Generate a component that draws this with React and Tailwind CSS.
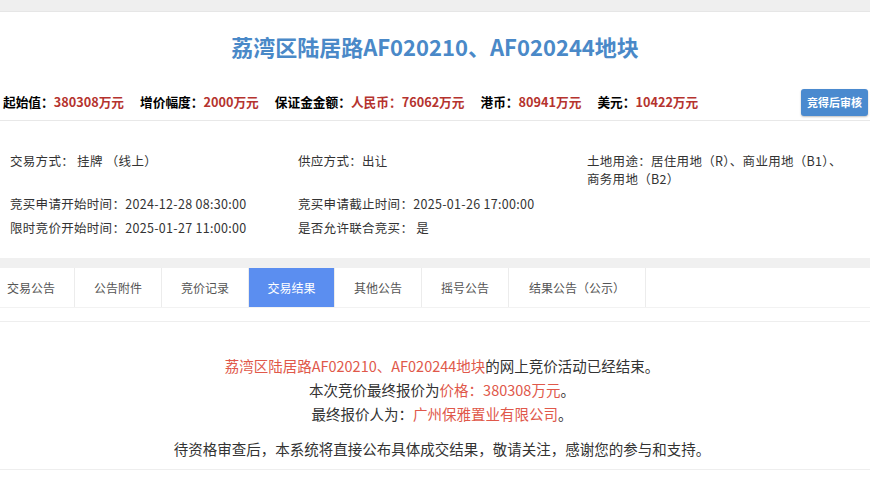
import React from 'react';

const tabs = [
  { name: '交易公告', w: 'w-[75px] justify-start pl-[7px]' },
  { name: '公告附件', w: 'w-[87px] justify-center' },
  { name: '竞价记录', w: 'w-[87px] justify-center' },
  { name: '交易结果', w: 'w-[86px] justify-center', active: true },
  { name: '其他公告', w: 'w-[87px] justify-center' },
  { name: '摇号公告', w: 'w-[87px] justify-center' },
  { name: '结果公告（公示）', w: 'w-[137px] justify-center' },
];

const prices = [
  ['起始值：', '380308万元'],
  ['增价幅度：', '2000万元'],
  ['保证金金额：', '人民币：76062万元'],
  ['港币：', '80941万元'],
  ['美元：', '10422万元'],
];

function Info({ label, children, className = 'leading-[17px]' }) {
  return (
    <div className={className}>
      <span>{label}</span>
      <span>{children}</span>
    </div>
  );
}

export default function App() {
  return (
    <div className="w-[870px] h-[492px] overflow-hidden bg-white text-[#333] font-['Noto_Sans_CJK_SC','Noto_Sans',sans-serif]">
      {/* 顶部灰条 */}
      <div className="h-3 bg-[#efefef] border-b border-[#e6e6e6]" />

      {/* 标题 */}
      <h1 className="pt-[19px] text-center text-[22px] leading-[30px] font-bold text-[#4a89c8]">
        荔湾区陆居路AF020210、AF020244地块
      </h1>

      {/* 价格行 */}
      <div className="mt-[27px] pb-[4px] border-b border-[#e8e8e8]">
        <div className="h-[28px] flex items-center pl-[3px] pr-[2px]">
          <div className="flex gap-[16px] text-[12.7px] font-bold text-black">
            {prices.map(([label, value]) => (
              <div key={label}>
                {label}
                <span className="text-[#b5332e]">{value}</span>
              </div>
            ))}
          </div>
          <button className="ml-auto w-[67px] h-[27px] rounded-[3px] bg-[#4a8acf] text-white text-[11px] font-bold shadow-[0_1px_2px_rgba(0,0,0,0.25)]">
            竞得后审核
          </button>
        </div>
      </div>

      {/* 详情 */}
      <div className="pt-[31px] pb-[22px] pl-[10px] grid grid-cols-[288px_289px_1fr] gap-y-[7px] text-[12.5px] tracking-[0.3px] text-[#333]">
        <Info label="交易方式：">&nbsp;挂牌 （线上）</Info>
        <Info label="供应方式：">出让</Info>
        <Info label="土地用途：" className="leading-[18px]">
          居住用地（R）、商业用地（B1）、
          <br />
          商务用地（B2）
        </Info>
        <Info label="竞买申请开始时间：">2024-12-28 08:30:00</Info>
        <Info label="竞买申请截止时间：">2025-01-26 17:00:00</Info>
        <div />
        <Info label="限时竞价开始时间：">2025-01-27 11:00:00</Info>
        <Info label="是否允许联合竞买：">&nbsp;是</Info>
        <div />
      </div>

      {/* 标签页 */}
      <div className="h-[10px] bg-[#f0f0f0]" />
      <div className="flex h-[40px] border-b border-[#f2f2f2]">
        {tabs.map((t) => (
          <div
            key={t.name}
            className={`${t.w} flex items-center text-[12px] border-r border-[#ececec] ${
              t.active ? 'bg-[#5b8ef0] text-white' : 'text-[#555]'
            }`}
          >
            {t.name}
          </div>
        ))}
      </div>
      <div className="h-[14px] border-b border-[#eeeeee]" />

      {/* 结果 */}
      <div className="pt-[32px] pb-[8px] pl-[14px] border-b border-[#eeeeee] text-center text-[14.5px] leading-[24px] text-[#333]">
        <p>
          <span className="text-[#e0584a]">荔湾区陆居路AF020210、AF020244地块</span>
          的网上竞价活动已经结束。
        </p>
        <p>
          本次竞价最终报价为<span className="text-[#e0584a]">价格：380308万元</span>。
        </p>
        <p>
          最终报价人为：<span className="text-[#e0584a]">广州保雅置业有限公司</span>。
        </p>
        <p className="mt-[11px]">待资格审查后，本系统将直接公布具体成交结果，敬请关注，感谢您的参与和支持。</p>
      </div>
    </div>
  );
}
